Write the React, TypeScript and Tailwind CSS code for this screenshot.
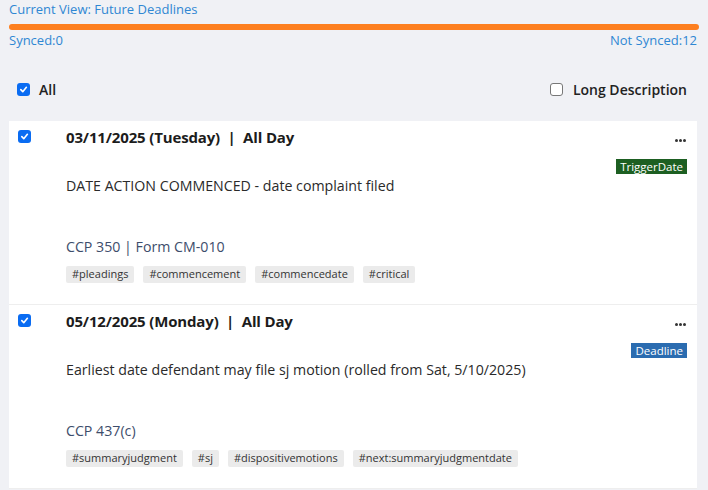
import React from 'react';

type Item = {
  date: string;
  badge: string;
  badgeClass: string;
  desc: string;
  cite: string;
  tags: string[];
};

const items: Item[] = [
  {
    date: '03/11/2025 (Tuesday)  |  All Day',
    badge: 'TriggerDate',
    badgeClass: 'bg-[#1d5f22]',
    desc: 'DATE ACTION COMMENCED - date complaint filed',
    cite: 'CCP 350 | Form CM-010',
    tags: ['#pleadings', '#commencement', '#commencedate', '#critical'],
  },
  {
    date: '05/12/2025 (Monday)  |  All Day',
    badge: 'Deadline',
    badgeClass: 'bg-[#2b6cb0]',
    desc: 'Earliest date defendant may file sj motion (rolled from Sat, 5/10/2025)',
    cite: 'CCP 437(c)',
    tags: ['#summaryjudgment', '#sj', '#dispositivemotions', '#next:summaryjudgmentdate'],
  },
];

const Check = ({ on }: { on: boolean }) =>
  on ? (
    <span className="flex h-[13px] w-[13px] items-center justify-center rounded-[3px] bg-[#0a6cf2]">
      <svg width="9" height="9" viewBox="0 0 10 10">
        <path d="M2 5.2 L4.2 7.4 L8.2 2.6" fill="none" stroke="#fff" strokeWidth="1.8" strokeLinecap="round" strokeLinejoin="round" />
      </svg>
    </span>
  ) : (
    <span className="h-[13px] w-[13px] rounded-[3px] border border-[#777] bg-white" />
  );

const Card = ({ it }: { it: Item }) => (
  <div className="flex bg-white pl-[9px] pr-[10px] pt-[6px] pb-[21px] border-b border-[#eeeeee]">
    <div className="w-[48px] pt-[3px]">
      <Check on />
    </div>
    <div className="flex-1">
      <div className="flex h-5 items-center justify-between">
        <span className="whitespace-pre text-[15px] font-bold tracking-[-0.15px] text-[#1c1c1c]">{it.date}</span>
        <span className="mt-[6px] flex gap-[1px] pr-[1px]">
          <i className="h-[3px] w-[3px] rounded-full bg-[#333]" />
          <i className="h-[3px] w-[3px] rounded-full bg-[#333]" />
          <i className="h-[3px] w-[3px] rounded-full bg-[#333]" />
        </span>
      </div>
      <div className="mt-3 flex justify-end">
        <span className={`flex h-[15px] items-center px-[4px] text-[11.5px] leading-none text-white ${it.badgeClass}`}>
          {it.badge}
        </span>
      </div>
      <div className="mt-[2px] text-[14.2px] leading-5 text-[#2a2a2a]">{it.desc}</div>
      <div className="mt-[41px] text-[14.2px] leading-5 text-[#3d4d6b]">{it.cite}</div>
      <div className="mt-[9px] flex gap-[9px]">
        {it.tags.map((t) => (
          <span key={t} className="flex h-[17px] items-center rounded-[2px] bg-[#ebebeb] px-[6px] text-[11px] text-[#333]">
            {t}
          </span>
        ))}
      </div>
    </div>
  </div>
);

export default function App() {
  return (
    <div className="min-h-[490px] bg-[#f0f1f5] font-['Open_Sans',sans-serif]">
      <div className="px-[9px] pt-[1px]">
        <div className="text-[13px] leading-[17px] text-[#2f87d3]">Current View: Future Deadlines</div>
        <div className="mt-[6px] h-[6px] rounded-full bg-[#fd7f1f]" />
        <div className="mt-[2px] flex justify-between text-[13px] leading-[17px] text-[#2f87d3]">
          <span>Synced:0</span>
          <span className="pr-[2px]">Not Synced:12</span>
        </div>
      </div>
      <div className="mt-[30px] flex items-center justify-between pl-[17px] pr-[21px]">
        <label className="flex items-center gap-[9px] text-[14px] font-semibold text-[#222]">
          <Check on />
          All
        </label>
        <label className="flex items-center gap-[10px] text-[14px] font-semibold text-[#222]">
          <Check on={false} />
          Long Description
        </label>
      </div>
      <div className="mt-[21px] ml-[9px] mr-[11px]">
        {items.map((it) => (
          <Card key={it.date} it={it} />
        ))}
      </div>
    </div>
  );
}
